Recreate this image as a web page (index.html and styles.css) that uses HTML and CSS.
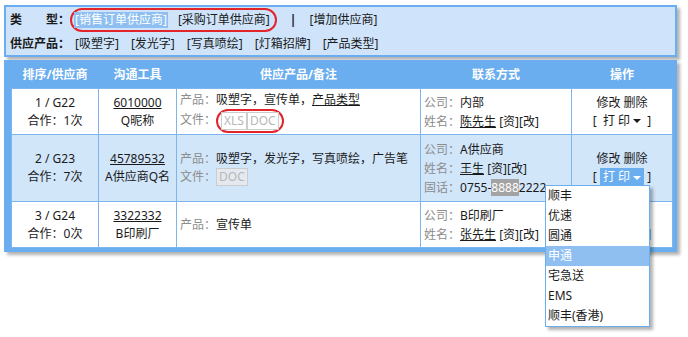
FILE: index.html
```html
<!DOCTYPE html>
<html lang="zh-CN">
<head>
    <meta charset="UTF-8">
    <title>供应商列表</title>
    <link rel="stylesheet" href="styles.css">
</head>
<body>
    <div class="page">
        <div class="filter">
            <div class="filter-row">
                <span class="label">类　　型：</span>
                <span class="ring ring-top"><a class="on">[销售订单供应商]</a><a>[采购订单供应商]</a></span>
                <span class="sep">|</span>
                <a>[增加供应商]</a>
            </div>
            <div class="filter-row">
                <span class="label">供应产品：</span>
                <a class="tag">[吸塑字]</a>
                <a class="tag">[发光字]</a>
                <a class="tag">[写真喷绘]</a>
                <a class="tag">[灯箱招牌]</a>
                <a class="tag">[产品类型]</a>
            </div>
        </div>

        <div class="grid">
            <table>
                <colgroup>
                    <col style="width:87px">
                    <col style="width:78px">
                    <col style="width:244px">
                    <col style="width:151px">
                    <col style="width:101px">
                </colgroup>
                <thead>
                    <tr>
                        <th>排序/供应商</th>
                        <th>沟通工具</th>
                        <th>供应产品/备注</th>
                        <th>联系方式</th>
                        <th>操作</th>
                    </tr>
                </thead>
                <tbody>
                    <tr class="row-a">
                        <td class="center">1 / G22<br>合作：1次</td>
                        <td class="center"><a class="u">6010000</a><br>Q昵称</td>
                        <td class="prod">
                            <div><span class="k">产品：</span>吸塑字，宣传单，<a class="u">产品类型</a></div>
                            <div><span class="k">文件：</span><span class="ring ring-file"><span class="file">XLS</span><span class="file">DOC</span></span></div>
                        </td>
                        <td class="contact">
                            <div><span class="k">公司：</span>内部</div>
                            <div><span class="k">姓名：</span><a class="u">陈先生</a> [资][改]</div>
                        </td>
                        <td class="center op">
                            <div>修改 删除</div>
                            <div>[ <span class="print">打 印<i class="caret"></i></span> ]</div>
                        </td>
                    </tr>
                    <tr class="row-b">
                        <td class="center">2 / G23<br>合作：7次</td>
                        <td class="center"><a class="u">45789532</a><br>A供应商Q名</td>
                        <td class="prod">
                            <div><span class="k">产品：</span>吸塑字，发光字，写真喷绘，广告笔</div>
                            <div><span class="k">文件：</span><span class="file file-on">DOC</span></div>
                        </td>
                        <td class="contact">
                            <div><span class="k">公司：</span>A供应商</div>
                            <div><span class="k">姓名：</span><a class="u">王生</a> [资][改]</div>
                            <div><span class="k">固话：</span>0755-<span class="mark">8888</span>2222</div>
                        </td>
                        <td class="center op">
                            <div>修改 删除</div>
                            <div>[ <span class="print active">打 印<i class="caret"></i></span> ]</div>
                        </td>
                    </tr>
                    <tr class="row-c">
                        <td class="center">3 / G24<br>合作：0次</td>
                        <td class="center"><a class="u">3322332</a><br>B印刷厂</td>
                        <td class="prod">
                            <div><span class="k">产品：</span>宣传单</div>
                        </td>
                        <td class="contact">
                            <div><span class="k">公司：</span>B印刷厂</div>
                            <div><span class="k">姓名：</span><a class="u">张先生</a> [资][改]</div>
                        </td>
                        <td class="center op">
                            <div>修改 删除</div>
                            <div>[ <span class="print">打 印<i class="caret"></i></span> ]</div>
                        </td>
                    </tr>
                </tbody>
            </table>
        </div>

        <ul class="dropdown">
            <li>顺丰</li>
            <li>优速</li>
            <li>圆通</li>
            <li class="hover">申通</li>
            <li>宅急送</li>
            <li>EMS</li>
            <li>顺丰(香港)</li>
        </ul>
    </div>
</body>
</html>
```

FILE: styles.css
```css
body {
    margin: 0;
    padding: 0;
    background-color: #FFFFFF;
    color: #1A1A1A;
    font-family: "Noto Sans", "Noto Sans CJK SC", sans-serif;
    font-size: 12px;
}

a {
    color: #1A1A1A;
    text-decoration: none;
}

.page {
    position: relative;
    min-height: 332px;
    padding: 5px 0 0 4px;
}

.filter {
    width: 673px;
    height: 52px;
    box-sizing: border-box;
    border: 2px solid #6AAEF0;
    background-color: #CFE4FA;
    padding: 0 4px;
    box-shadow: 3px 3px 3px rgba(0, 0, 0, 0.3);
}

.filter-row {
    display: flex;
    align-items: center;
    height: 24px;
    white-space: nowrap;
}

.label {
    font-weight: bold;
    width: 60px;
}

.ring {
    display: inline-flex;
    align-items: center;
    border: 2px solid #E3242B;
    border-radius: 12px;
}

.ring-top {
    height: 20px;
    padding: 0 5px 0 2px;
    margin-top: 2px;
}

.ring-top a {
    line-height: 16px;
}

.ring-top a + a {
    margin-left: 10px;
}

.on {
    background-color: #8EBFF0;
    color: #FFFFFF;
    padding: 0 1px;
}

.sep {
    font-weight: bold;
    margin: 0 13px 0 13px;
}

.tag {
    margin-left: 5px;
    margin-right: 7px;
}

.grid {
    width: 661px;
    margin-top: 3px;
    padding: 0 5px 4px 7px;
    background-color: #6AAEF0;
    box-shadow: 3px 3px 3px rgba(0, 0, 0, 0.3);
}

table {
    width: 661px;
    table-layout: fixed;
    border-collapse: collapse;
}

th {
    height: 28px;
    padding: 0;
    color: #FFFFFF;
    font-weight: bold;
    text-align: center;
    background-color: #6AAEF0;
}

td {
    border: 1px solid #7DB6EE;
    padding: 0 3px;
    line-height: 18px;
    vertical-align: middle;
    white-space: nowrap;
}

.row-a td {
    height: 45px;
    background-color: #FFFFFF;
}

.row-b td {
    height: 66px;
    background-color: #D2E6FA;
}

.row-c td {
    height: 45px;
    background-color: #FFFFFF;
}

.center {
    text-align: center;
}

.u {
    text-decoration: underline;
}

.k {
    color: #8C8C8C;
}

.contact {
    line-height: 19px;
}

.ring-file {
    padding: 1px 3px;
    vertical-align: middle;
}

.file {
    display: inline-block;
    border: 1px solid #CCCCCC;
    color: #B8B8B8;
    line-height: 16px;
    padding: 0 2px;
    vertical-align: middle;
}

.file-on {
    background-color: #E4E9EF;
}

.mark {
    background-color: #A3A3A3;
    color: #FFFFFF;
}

.op {
    line-height: 18px;
}

.print {
    padding: 0 3px;
}

.print.active {
    background-color: #6AAEF0;
    color: #FFFFFF;
}

.caret {
    display: inline-block;
    width: 0;
    height: 0;
    margin-left: 3px;
    border-left: 4px solid transparent;
    border-right: 4px solid transparent;
    border-top: 4px solid currentColor;
    vertical-align: middle;
}

.dropdown {
    position: absolute;
    left: 545px;
    top: 185px;
    width: 103px;
    margin: 0;
    padding: 0;
    list-style: none;
    background-color: #FFFFFF;
    border: 1px solid #6AAEF0;
    box-shadow: 3px 3px 3px rgba(0, 0, 0, 0.3);
}

.dropdown li {
    height: 20px;
    line-height: 20px;
    padding-left: 2px;
}

.dropdown li.hover {
    background-color: #8EBFF0;
    color: #FFFFFF;
}
```
